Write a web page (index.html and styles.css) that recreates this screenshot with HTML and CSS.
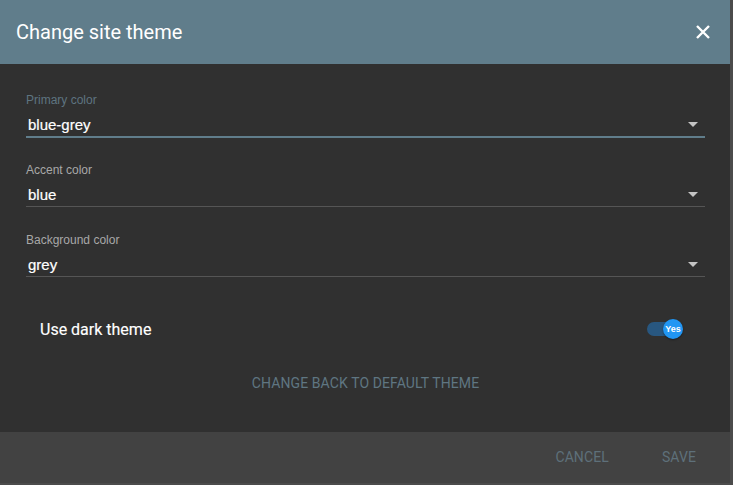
FILE: index.html
```html
<!DOCTYPE html>
<html lang="en">
<head>
<meta charset="utf-8">
<title>Change site theme</title>
<link rel="stylesheet" href="styles.css">
</head>
<body>
<div class="page">
  <div class="dialog">
    <header class="dialog-header">
      <h1 class="dialog-title">Change site theme</h1>
      <button class="close-btn" aria-label="Close">
        <svg width="16" height="16" viewBox="0 0 16 16"><path d="M2 2 L14 14 M14 2 L2 14" stroke="#fff" stroke-width="2.4" fill="none"/></svg>
      </button>
    </header>
    <main class="dialog-content">
      <div class="field">
        <div class="field-label focused">Primary color</div>
        <div class="select focused">
          <span class="select-value">blue-grey</span>
          <span class="select-arrow"></span>
        </div>
      </div>
      <div class="field">
        <div class="field-label">Accent color</div>
        <div class="select">
          <span class="select-value">blue</span>
          <span class="select-arrow"></span>
        </div>
      </div>
      <div class="field">
        <div class="field-label">Background color</div>
        <div class="select">
          <span class="select-value">grey</span>
          <span class="select-arrow"></span>
        </div>
      </div>
      <div class="toggle-row">
        <span class="toggle-label">Use dark theme</span>
        <span class="toggle">
          <span class="toggle-track"></span>
          <span class="toggle-thumb">Yes</span>
        </span>
      </div>
      <div class="reset-row">
        <button class="text-btn">Change back to default theme</button>
      </div>
    </main>
    <footer class="dialog-footer">
      <button class="text-btn muted">Cancel</button>
      <button class="text-btn muted">Save</button>
    </footer>
  </div>
</div>
</body>
</html>
```

FILE: styles.css
```css
* { box-sizing: border-box; }
html, body { margin: 0; padding: 0; }
body {
  background: #4b4b4b;
  width: 733px;
  height: 485px;
  overflow: hidden;
  font-family: Roboto, "Liberation Sans", Arial, sans-serif;
}
.page { width: 733px; height: 485px; }
.dialog {
  width: 730px;
  height: 483px;
  display: flex;
  flex-direction: column;
  background: #303030;
}
.dialog-header {
  height: 64px;
  flex: none;
  background: #607d8b;
  display: flex;
  align-items: center;
  justify-content: space-between;
  padding: 0 19px 0 16px;
}
.dialog-title {
  margin: 0;
  font-size: 20px;
  font-weight: 400;
  color: #fff;
  letter-spacing: 0;
}
.close-btn {
  background: none;
  border: 0;
  padding: 0;
  width: 16px;
  height: 16px;
  display: flex;
}
.dialog-content {
  flex: 1;
  padding: 29px 25px 0 26px;
  display: flex;
  flex-direction: column;
}
.field { margin-bottom: 26px; }
.field-label {
  font-family: "Liberation Sans", Arial, sans-serif;
  font-size: 12px;
  line-height: 14px;
  color: #a8a8a8;
  margin-bottom: 8px;
}
.field-label.focused { color: #5e7480; }
.select {
  height: 22px;
  display: flex;
  align-items: center;
  justify-content: space-between;
  border-bottom: 1px solid #555;
  padding-bottom: 3px;
}
.select.focused {
  border-bottom-color: #607d8b;
  box-shadow: 0 1px 0 #607d8b;
}
.select-value {
  font-family: "Liberation Sans", Arial, sans-serif;
  font-size: 15px;
  color: #fff;
  padding-left: 2px;
  -webkit-text-stroke: 0.2px #fff;
}
.select-arrow {
  width: 0;
  height: 0;
  border-left: 5px solid transparent;
  border-right: 5px solid transparent;
  border-top: 5px solid #c4c4c4;
  margin-right: 7px;
}
.toggle-row {
  height: 48px;
  margin-top: 2px;
  display: flex;
  align-items: center;
  justify-content: space-between;
  padding: 0 22px 0 14px;
}
.toggle-label {
  font-size: 16px;
  font-weight: 400;
  color: #fff;
  -webkit-text-stroke: 0.15px #fff;
}
.toggle {
  position: relative;
  width: 36px;
  height: 20px;
  display: block;
}
.toggle-track {
  position: absolute;
  left: 0;
  top: 3px;
  width: 30px;
  height: 14px;
  border-radius: 7px;
  background: #285780;
}
.toggle-thumb {
  position: absolute;
  right: 0;
  top: 0;
  width: 20px;
  height: 20px;
  border-radius: 50%;
  background: #2196f3;
  color: #fff;
  font-family: "Liberation Sans", Arial, sans-serif;
  font-size: 9px;
  font-weight: 700;
  display: flex;
  align-items: center;
  justify-content: center;
  box-shadow: 0 1px 2px rgba(0,0,0,0.4);
}
.reset-row {
  margin-top: 12px;
  display: flex;
  justify-content: center;
}
.text-btn {
  background: none;
  border: 0;
  height: 36px;
  padding: 0 16px;
  font-family: Roboto, "Liberation Sans", Arial, sans-serif;
  font-size: 14px;
  font-weight: 400;
  text-transform: uppercase;
  color: #5f7682;
  letter-spacing: 0.1px;
}
.text-btn.muted { color: #5e707a; }
.dialog-footer {
  height: 51px;
  flex: none;
  background: #424242;
  display: flex;
  align-items: center;
  justify-content: flex-end;
  gap: 21px;
  padding: 0 18px 2px 0;
}
```
